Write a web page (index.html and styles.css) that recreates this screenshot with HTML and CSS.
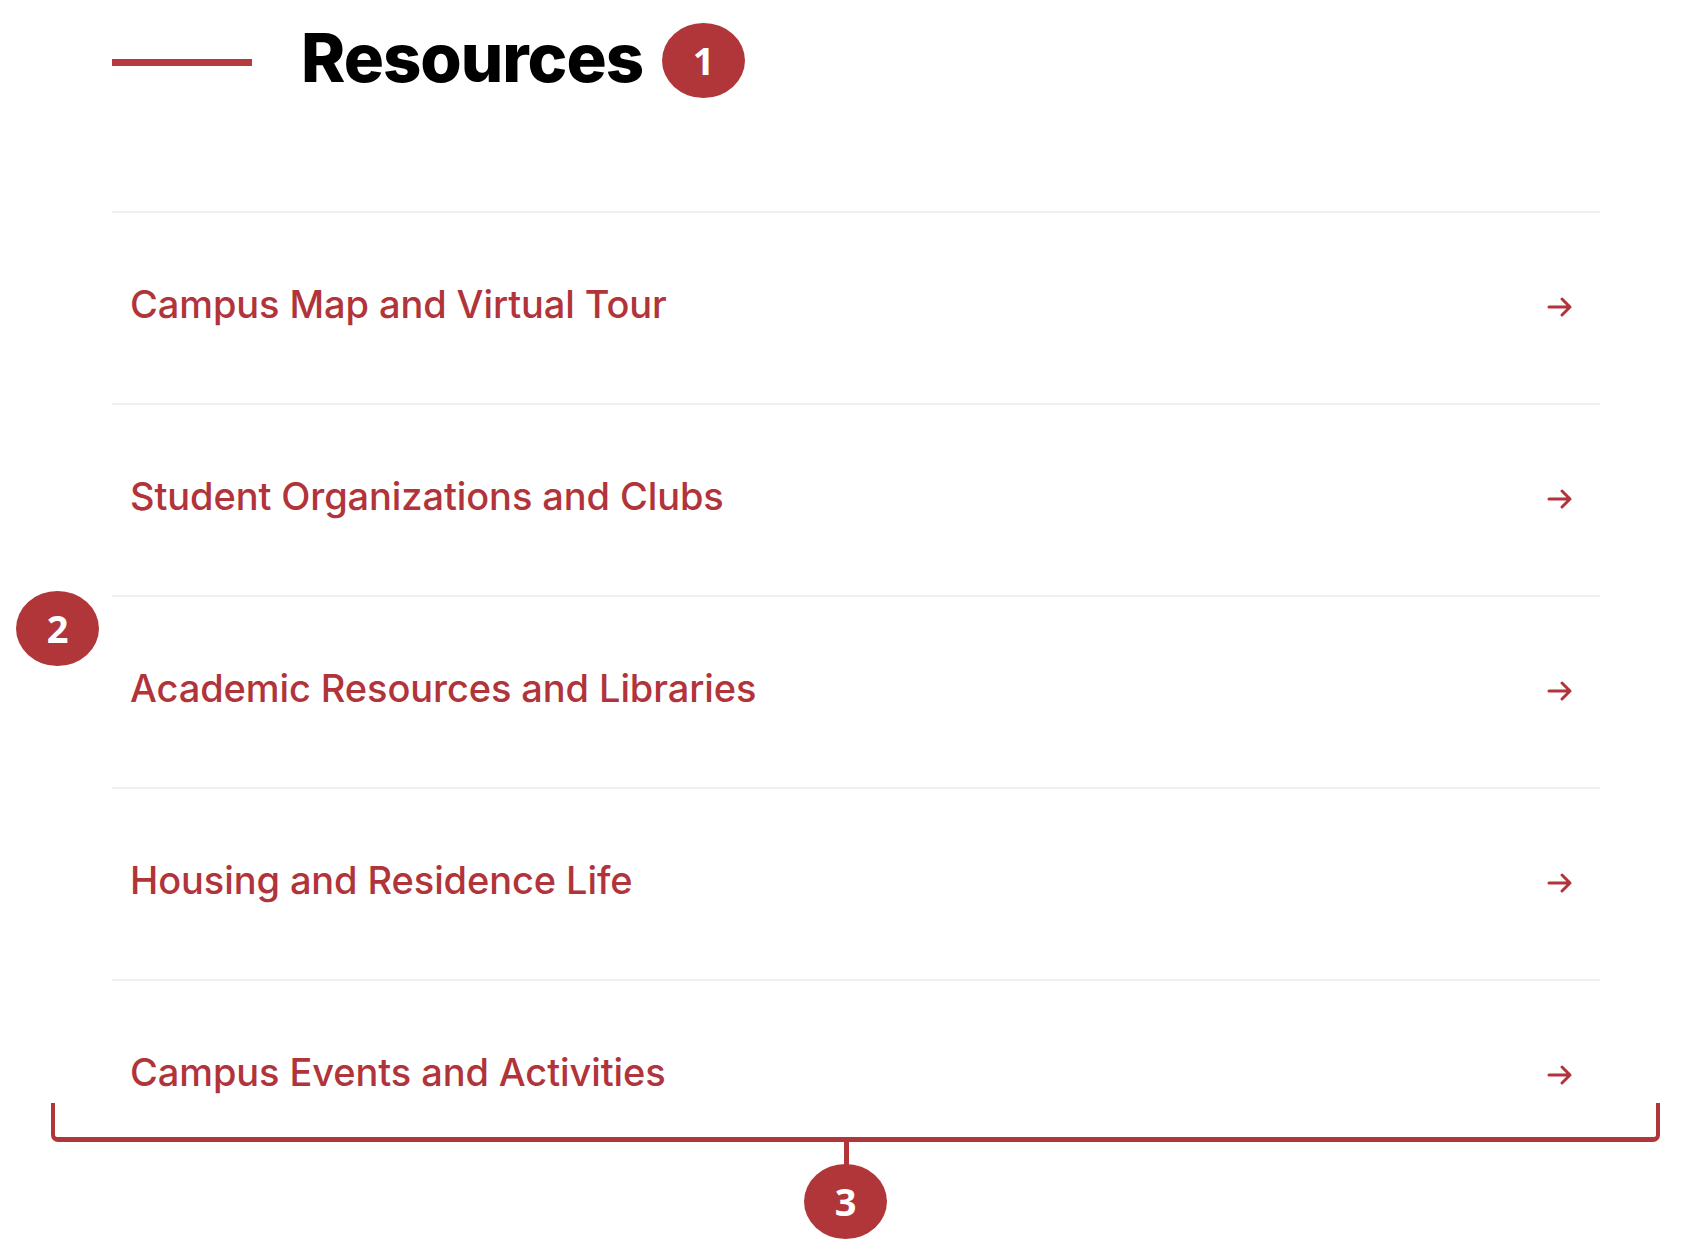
FILE: index.html
```html
<!DOCTYPE html>
<html lang="en">
<head>
    <meta charset="UTF-8">
    <meta name="viewport" content="width=device-width, initial-scale=1.0">
    <title>Resources</title>
    <link rel="stylesheet" href="styles.css">
</head>
<body>
    <section class="resources">
        <header class="resources-head">
            <span class="rule"></span>
            <h2>Resources</h2>
        </header>

        <ul class="link-list">
            <li><a href="#">Campus Map and Virtual Tour <svg class="arrow" viewBox="0 0 26 22"><path d="M2 11H23M15 3l8 8-8 8"/></svg></a></li>
            <li><a href="#">Student Organizations and Clubs <svg class="arrow" viewBox="0 0 26 22"><path d="M2 11H23M15 3l8 8-8 8"/></svg></a></li>
            <li><a href="#">Academic Resources and Libraries <svg class="arrow" viewBox="0 0 26 22"><path d="M2 11H23M15 3l8 8-8 8"/></svg></a></li>
            <li><a href="#">Housing and Residence Life <svg class="arrow" viewBox="0 0 26 22"><path d="M2 11H23M15 3l8 8-8 8"/></svg></a></li>
            <li><a href="#">Campus Events and Activities <svg class="arrow" viewBox="0 0 26 22"><path d="M2 11H23M15 3l8 8-8 8"/></svg></a></li>
        </ul>
    </section>

    <!-- numbered callouts -->
    <span class="badge badge-1">1</span>
    <span class="badge badge-2">2</span>
    <div class="bracket"></div>
    <span class="stem"></span>
    <span class="badge badge-3">3</span>
</body>
</html>
```

FILE: styles.css
```css
body {
    margin: 0;
    background-color: #fff;
    font-family: Inter, "Liberation Sans", sans-serif;
    min-height: 1260px;
    position: relative;
}
.resources {
    width: 1488px;
    padding-left: 112px;
    padding-top: 24px;
}
.resources-head {
    display: flex;
    align-items: center;
    height: 68px;
}
.rule {
    width: 140px;
    height: 7px;
    margin-top: 8px;
    margin-right: 49px;
    background-color: #b5393d;
}
.resources-head h2 {
    margin: 0;
    font-family: Inter, "Liberation Sans", sans-serif;
    font-weight: 800;
    font-size: 67px;
    line-height: 68px;
    letter-spacing: -1px;
    color: #000;
}
.link-list {
    list-style: none;
    margin: 119px 0 0;
    padding: 0;
}
.link-list li {
    border-top: 2px solid #f0f0f0;
}
.link-list a {
    display: flex;
    align-items: center;
    justify-content: space-between;
    height: 182px;
    padding: 0 27px 8px 18px;
    font-size: 38px;
    font-weight: 500;
    letter-spacing: -0.1px;
    color: #b1343a;
    text-decoration: none;
}
.arrow {
    width: 26px;
    height: 22px;
    margin-top: 6px;
    fill: none;
    stroke: #b1343a;
    stroke-width: 3;
    stroke-linecap: round;
    stroke-linejoin: round;
}
.badge {
    position: absolute;
    width: 83px;
    height: 75px;
    border-radius: 50%;
    background-color: #b0363a;
    color: #fff;
    font-family: "Open Sans", sans-serif;
    font-weight: bold;
    font-size: 38px;
    line-height: 75px;
    text-align: center;
}
.badge-1 {
    left: 662px;
    top: 23px;
}
.badge-2 {
    left: 16px;
    top: 591px;
}
.badge-3 {
    left: 804px;
    top: 1164px;
}
.bracket {
    position: absolute;
    left: 51px;
    top: 1103px;
    width: 1601px;
    height: 34px;
    border: 4px solid #b0363a;
    border-top: none;
    border-bottom-width: 5px;
    border-radius: 0 0 7px 7px;
}
.stem {
    position: absolute;
    left: 844px;
    top: 1140px;
    width: 5px;
    height: 26px;
    background-color: #b0363a;
}
```
